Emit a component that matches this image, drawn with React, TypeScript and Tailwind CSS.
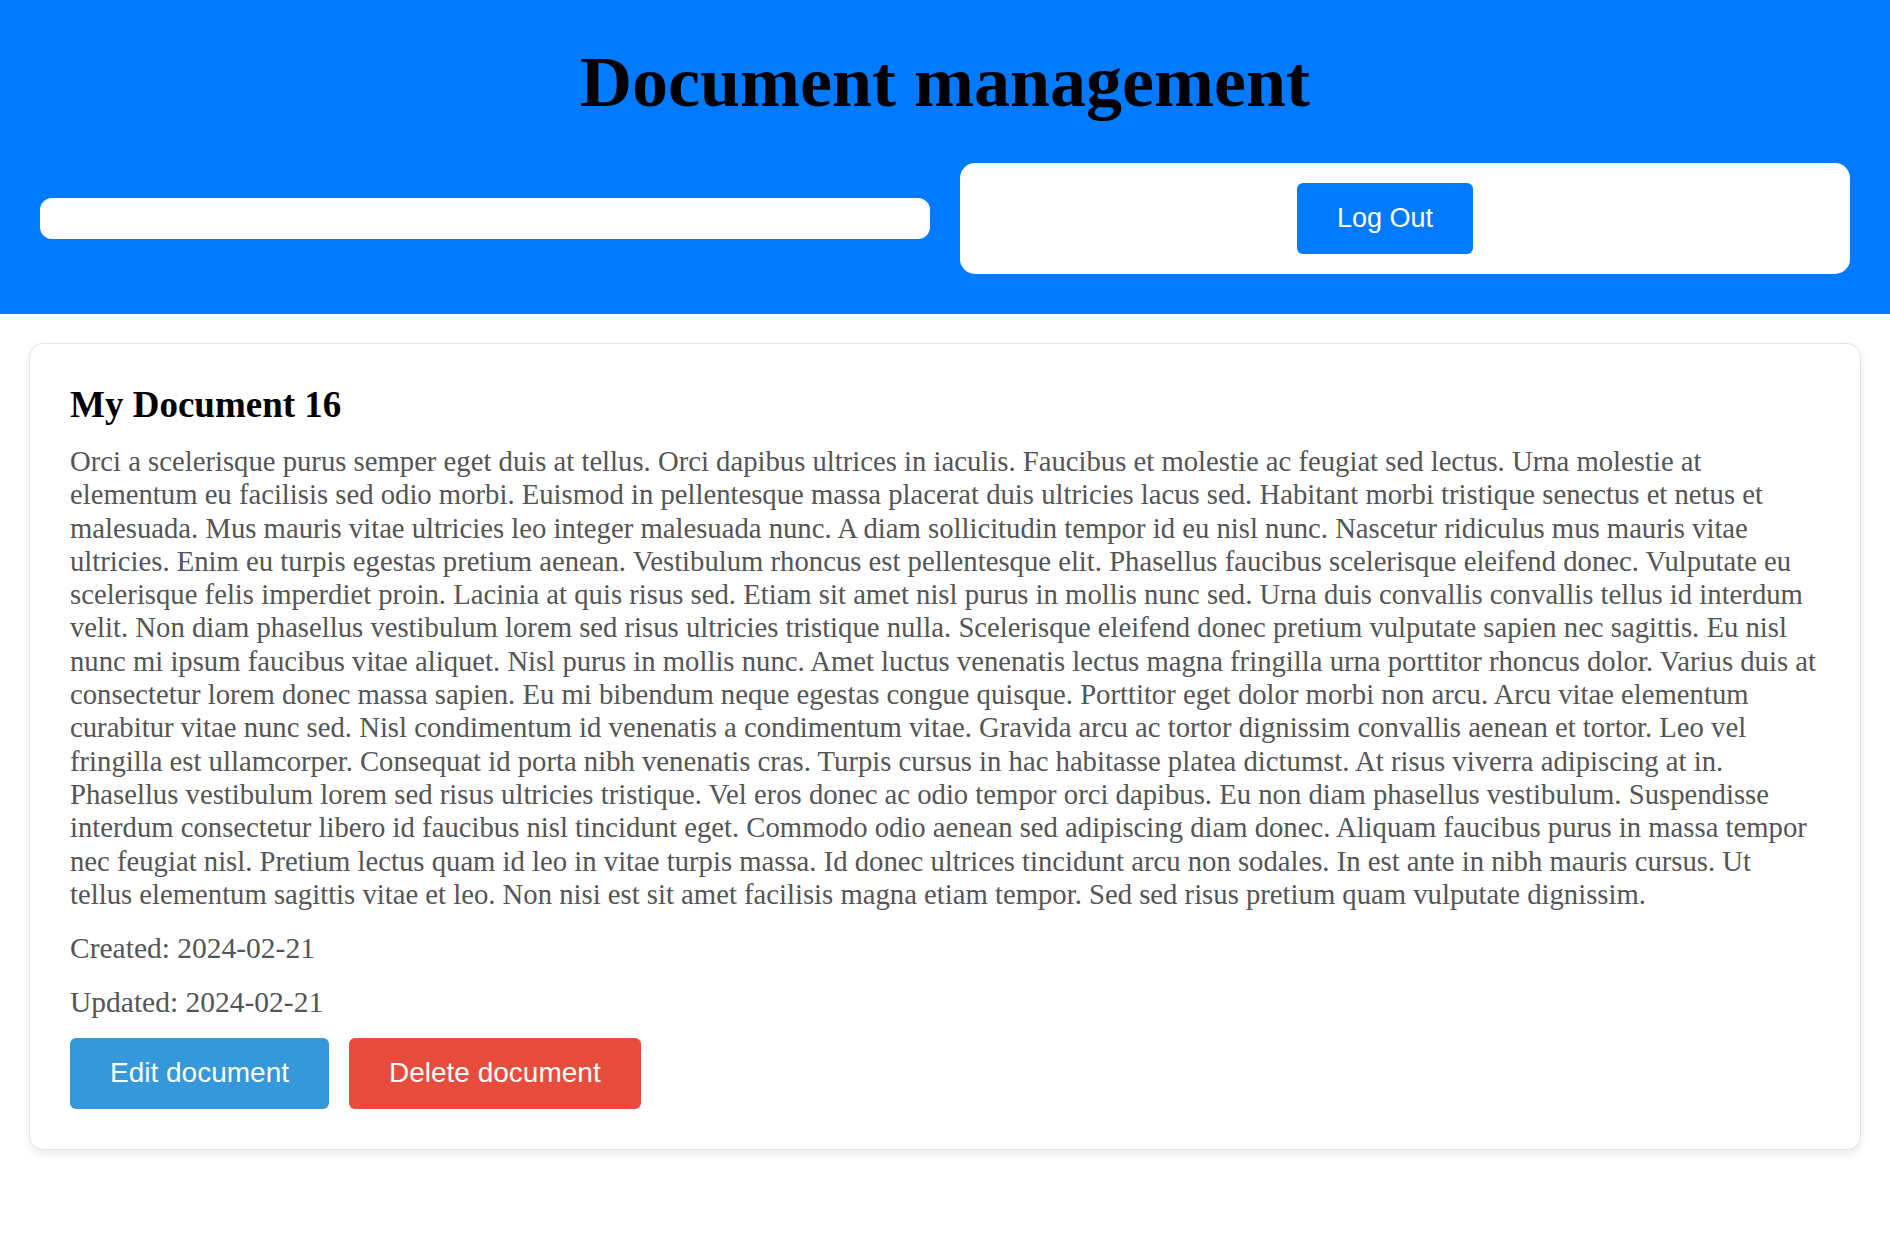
import React from "react";

const BODY =
  "Orci a scelerisque purus semper eget duis at tellus. Orci dapibus ultrices in iaculis. Faucibus et molestie ac feugiat sed lectus. Urna molestie at elementum eu facilisis sed odio morbi. Euismod in pellentesque massa placerat duis ultricies lacus sed. Habitant morbi tristique senectus et netus et malesuada. Mus mauris vitae ultricies leo integer malesuada nunc. A diam sollicitudin tempor id eu nisl nunc. Nascetur ridiculus mus mauris vitae ultricies. Enim eu turpis egestas pretium aenean. Vestibulum rhoncus est pellentesque elit. Phasellus faucibus scelerisque eleifend donec. Vulputate eu scelerisque felis imperdiet proin. Lacinia at quis risus sed. Etiam sit amet nisl purus in mollis nunc sed. Urna duis convallis convallis tellus id interdum velit. Non diam phasellus vestibulum lorem sed risus ultricies tristique nulla. Scelerisque eleifend donec pretium vulputate sapien nec sagittis. Eu nisl nunc mi ipsum faucibus vitae aliquet. Nisl purus in mollis nunc. Amet luctus venenatis lectus magna fringilla urna porttitor rhoncus dolor. Varius duis at consectetur lorem donec massa sapien. Eu mi bibendum neque egestas congue quisque. Porttitor eget dolor morbi non arcu. Arcu vitae elementum curabitur vitae nunc sed. Nisl condimentum id venenatis a condimentum vitae. Gravida arcu ac tortor dignissim convallis aenean et tortor. Leo vel fringilla est ullamcorper. Consequat id porta nibh venenatis cras. Turpis cursus in hac habitasse platea dictumst. At risus viverra adipiscing at in. Phasellus vestibulum lorem sed risus ultricies tristique. Vel eros donec ac odio tempor orci dapibus. Eu non diam phasellus vestibulum. Suspendisse interdum consectetur libero id faucibus nisl tincidunt eget. Commodo odio aenean sed adipiscing diam donec. Aliquam faucibus purus in massa tempor nec feugiat nisl. Pretium lectus quam id leo in vitae turpis massa. Id donec ultrices tincidunt arcu non sodales. In est ante in nibh mauris cursus. Ut tellus elementum sagittis vitae et leo. Non nisi est sit amet facilisis magna etiam tempor. Sed sed risus pretium quam vulputate dignissim.";

export default function App() {
  return (
    <div className="min-h-[1260px] bg-white font-['Liberation_Serif',serif]">
      <header className="bg-[#007bff] pt-[28px] pb-[40px]">
        <h1 className="text-center text-[72px] font-bold leading-normal text-black">
          Document management
        </h1>
        <div className="mt-[27px] grid grid-cols-2 items-center gap-[30px] px-[40px]">
          <input
            type="text"
            className="block h-[41px] w-full min-w-0 rounded-[12px] bg-white px-3 outline-none"
          />
          <div className="flex h-[111px] items-center justify-center rounded-[15px] bg-white pr-[40px]">
            <button className="h-[71px] rounded-[6px] bg-[#007bff] px-[40px] font-['Liberation_Sans',sans-serif] text-[27px] text-white">
              Log Out
            </button>
          </div>
        </div>
      </header>
      <main className="px-[29px] pt-[29px]">
        <div className="rounded-[14px] border border-[#e3e3e3] bg-white p-[40px] shadow-[0_4px_8px_rgba(0,0,0,0.08)]">
          <h2 className="mb-[20px] text-[37px] font-bold leading-[41px] text-black">
            My Document 16
          </h2>
          <p className="text-[28.7px] leading-[33.3px] text-[#555]">{BODY}</p>
          <p className="mt-[21px] text-[29.5px] leading-[33.3px] text-[#555]">
            Created: 2024-02-21
          </p>
          <p className="mt-[21px] text-[29.5px] leading-[33.3px] text-[#555]">
            Updated: 2024-02-21
          </p>
          <div className="mt-[18px] flex gap-[20px] font-['Liberation_Sans',sans-serif]">
            <button className="h-[71px] rounded-[6px] bg-[#3498db] px-[40px] text-[28px] text-white">
              Edit document
            </button>
            <button className="h-[71px] rounded-[6px] bg-[#e74c3c] px-[40px] text-[28px] text-white">
              Delete document
            </button>
          </div>
        </div>
      </main>
    </div>
  );
}
